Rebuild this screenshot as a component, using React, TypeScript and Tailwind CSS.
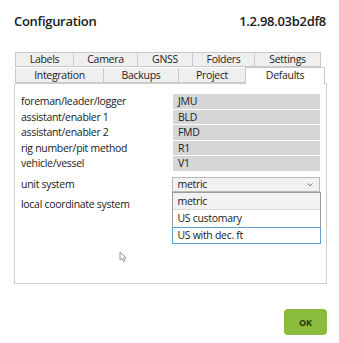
import { FC } from "react";

const fields = [
  { label: "foreman/leader/logger", value: "JMU" },
  { label: "assistant/enabler 1", value: "BLD" },
  { label: "assistant/enabler 2", value: "FMD" },
  { label: "rig number/pit method", value: "R1" },
  { label: "vehicle/vessel", value: "V1" },
];

const topTabs = [
  { name: "Labels", w: "w-[59px]" },
  { name: "Camera", w: "w-[65px]" },
  { name: "GNSS", w: "w-[56px]" },
  { name: "Folders", w: "w-[63px]" },
  { name: "Settings", w: "w-[67px]" },
];

const bottomTabs = [
  { name: "Integration", w: "w-[89px]" },
  { name: "Backups", w: "w-[76px]" },
  { name: "Project", w: "w-[68px]" },
];

const App: FC = () => {
  return (
    <div className="w-[339px] h-[343px] bg-white text-[#1a1a1a] overflow-hidden font-['Open_Sans','Noto_Sans',sans-serif]">
      {/* header */}
      <div className="flex justify-between items-center pl-[14px] pr-[13px] pt-[11px] h-[32px]">
        <span className="text-[13px] font-semibold tracking-[-0.3px]">Configuration</span>
        <span className="text-[13px] font-semibold tracking-[-0.3px]">1.2.98.03b2df8</span>
      </div>

      {/* tabs */}
      <div className="mt-[20px] ml-[15px] w-[312px] text-[10.5px] tracking-[-0.3px]">
        <div className="flex h-[15px]">
          {topTabs.map((t) => (
            <div
              key={t.name}
              className={`${t.w} h-[15px] bg-[#efefef] border border-[#c9c9c9] -ml-px first:ml-0 flex items-center justify-center leading-none text-[#222]`}
            >
              {t.name}
            </div>
          ))}
        </div>
        <div className="flex h-[16px] items-end">
          {bottomTabs.map((t) => (
            <div
              key={t.name}
              className={`${t.w} h-[15px] bg-[#efefef] border border-[#c9c9c9] border-t-0 -ml-px first:ml-0 flex items-center justify-center leading-none text-[#222]`}
            >
              {t.name}
            </div>
          ))}
          <div className="w-[80px] h-[17px] -mb-px bg-white border border-b-0 border-[#c9c9c9] -ml-px flex items-center justify-center pb-[2px] leading-none text-[#222] relative z-10">
            Defaults
          </div>
        </div>
      </div>

      {/* panel */}
      <div className="ml-[14px] w-[313px] h-[201px] border border-[#cfcfcf] bg-white pt-[10px] pl-[6px] pr-[6px] text-[10.5px] tracking-[-0.3px]">
        <div className="flex flex-col gap-[1px]">
          {fields.map((f) => (
            <div key={f.label} className="flex items-center h-[14.5px]">
              <span className="w-[152px] leading-none">{f.label}</span>
              <div className="w-[147px] h-[14.5px] bg-[#d6d6d6] flex items-center pl-[5px] leading-none">
                {f.value}
              </div>
            </div>
          ))}
        </div>

        <div className="flex items-center h-[15px] mt-[6.5px]">
          <span className="w-[151px] leading-none">unit system</span>
          <div className="relative w-[149px] h-[15px]">
            <div className="w-full h-full border border-[#b9b9b9] bg-[#f1f1f1] flex items-center justify-between pl-[5px] pr-[6px] leading-none">
              <span>metric</span>
              <svg width="6" height="4" viewBox="0 0 6 4" className="text-[#777]">
                <path d="M0.5 0.5 L3 3 L5.5 0.5" fill="none" stroke="currentColor" strokeWidth="1" />
              </svg>
            </div>
            {/* open dropdown */}
            <div className="absolute left-0 top-[15px] w-[149px] border border-[#9c9c9c] bg-white z-20 leading-none">
              <div className="h-[17px] bg-[#f2f2f2] flex items-center pl-[5px] border-b border-[#d8d8d8]">metric</div>
              <div className="h-[17px] flex items-center pl-[5px]">US customary</div>
              <div className="h-[17px] flex items-center pl-[5px] border border-[#5c9fd0] -mx-px -mb-px">US with dec. ft</div>
            </div>
          </div>
        </div>

        <div className="flex items-center h-[14px] mt-[5px]">
          <span className="leading-none">local coordinate system</span>
        </div>

        <div className="mt-[40px] ml-[98px]">
          <svg width="9" height="12" viewBox="0 0 9 12">
            <path
              d="M1 1 L1 9 L3 7.5 L4.5 10.5 L6 9.8 L4.6 7 L7.2 7 Z"
              fill="#fff"
              stroke="#8a8a8a"
              strokeWidth="0.9"
              strokeLinejoin="round"
            />
          </svg>
        </div>
      </div>

      {/* footer */}
      <div className="flex justify-end pr-[12px] mt-[25px]">
        <button className="w-[43px] h-[26px] rounded-[4px] bg-[#8bbb3c] text-[9px] font-bold text-[#2a3318] leading-none">
          OK
        </button>
      </div>
    </div>
  );
};

export default App;
